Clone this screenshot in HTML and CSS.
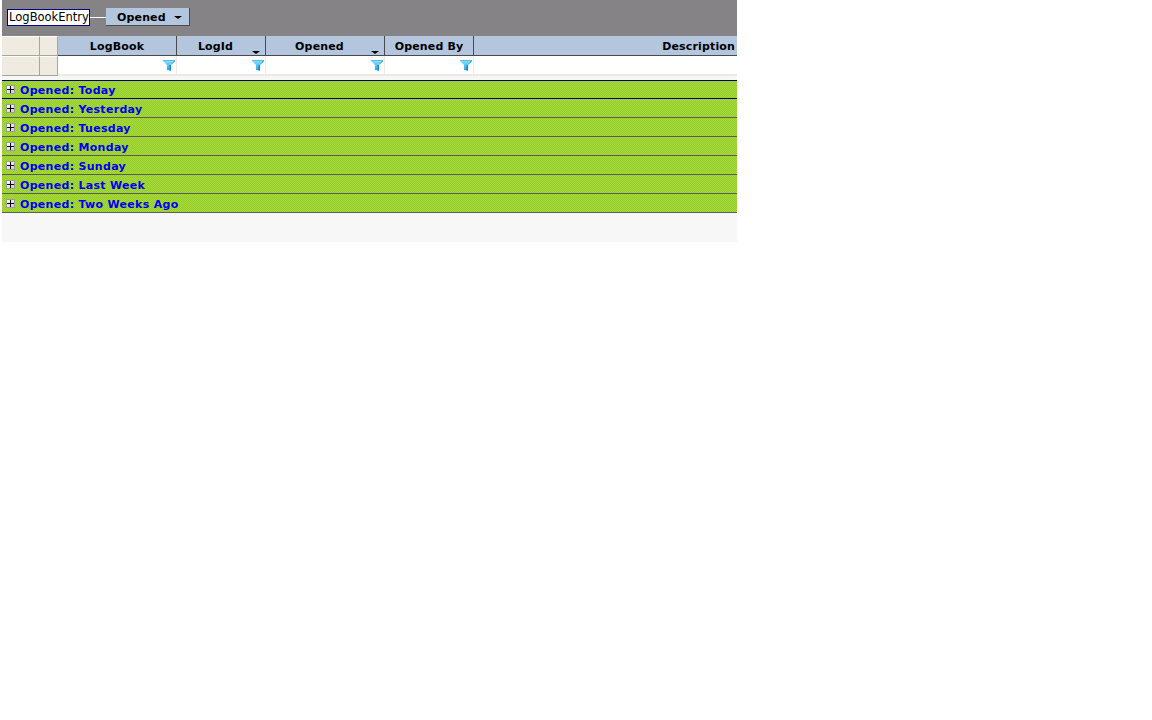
FILE: index.html
```html
<!DOCTYPE html>
<html lang="en">
<head>
<meta charset="utf-8">
<title>Log Book Entries</title>
<link rel="stylesheet" href="styles.css">
</head>
<body>
<svg class="defs" width="0" height="0" aria-hidden="true">
  <defs>
    <linearGradient id="plusfill" x1="0" y1="0" x2="1" y2="1">
      <stop offset="0" stop-color="#ffffff"/>
      <stop offset="1" stop-color="#c8c8c4"/>
    </linearGradient>
    <linearGradient id="funnelfill" x1="0" y1="0" x2="0" y2="1">
      <stop offset="0" stop-color="#8fe0fa"/>
      <stop offset="1" stop-color="#2aa8e6"/>
    </linearGradient>
    <symbol id="funnel" viewBox="0 0 12 12">
      <path d="M0 1h12v1L8 6v5.500L4 11V6L0 2z" fill="url(#funnelfill)"/>
      <path d="M0 1h12v1H0z" fill="#4fc3f0"/>
      <path d="M6.500 6H8v5.500H6.500zM8 6l3-4h1L8 6z" fill="#0f86c6"/>
    </symbol>
    <symbol id="plus" viewBox="0 0 9 9">
      <rect x=".5" y=".5" width="8" height="8" fill="url(#plusfill)" stroke="#9a9a9a"/>
      <path d="M1 4h7v1H1zM4 1h1v7H4z" fill="#000"/>
    </symbol>
  </defs>
</svg>
<main class="grid-wrap">
  <div class="group-bar">
    <span class="band-name">LogBookEntry</span>
    <span class="connector"></span>
    <span class="group-chip">Opened<i class="caret"></i></span>
  </div>
  <div class="cols head-row">
    <div class="cell stub"></div>
    <div class="cell stub"></div>
    <div class="cell hcell">LogBook</div>
    <div class="cell hcell sorted">LogId<i class="caret sort"></i></div>
    <div class="cell hcell sorted">Opened<i class="caret sort"></i></div>
    <div class="cell hcell">Opened By</div>
    <div class="cell hcell desc">Description</div>
  </div>
  <div class="cols filter-row">
    <div class="cell stub"></div>
    <div class="cell stub"></div>
    <div class="cell fcell"><svg class="funnel"><use href="#funnel"/></svg></div>
    <div class="cell fcell"><svg class="funnel"><use href="#funnel"/></svg></div>
    <div class="cell fcell"><svg class="funnel"><use href="#funnel"/></svg></div>
    <div class="cell fcell"><svg class="funnel"><use href="#funnel"/></svg></div>
    <div class="cell fcell last"></div>
  </div>
  <div class="groups">
    <div class="group active"><svg class="plus"><use href="#plus"/></svg><span class="group-label">Opened: Today</span></div>
    <div class="group"><svg class="plus"><use href="#plus"/></svg><span class="group-label">Opened: Yesterday</span></div>
    <div class="group"><svg class="plus"><use href="#plus"/></svg><span class="group-label">Opened: Tuesday</span></div>
    <div class="group"><svg class="plus"><use href="#plus"/></svg><span class="group-label">Opened: Monday</span></div>
    <div class="group"><svg class="plus"><use href="#plus"/></svg><span class="group-label">Opened: Sunday</span></div>
    <div class="group"><svg class="plus"><use href="#plus"/></svg><span class="group-label">Opened: Last Week</span></div>
    <div class="group"><svg class="plus"><use href="#plus"/></svg><span class="group-label">Opened: Two Weeks Ago</span></div>
  </div>
</main>
</body>
</html>
```
FILE: styles.css
```css
html, body { margin: 0; padding: 0; background: #fff; }
body { font-family: "DejaVu Sans", Verdana, sans-serif; padding-left: 2px; }
.defs { display: block; height: 0; }
.grid-wrap { width: 735px; background: #f7f7f7; height: 242px; }
.group-bar {
  height: 36px; background: #868386; display: flex; align-items: center;
  padding: 0 0 2px 5px; box-sizing: border-box;
}
.band-name {
  box-sizing: border-box; width: 83px; height: 17px; line-height: 15px;
  background: #fff; border: 1px solid #00007f; font-size: 11.5px; color: #000;
  text-align: center; white-space: nowrap; overflow: hidden; padding-left: 1px;
}
.connector { width: 16px; height: 1px; background: #fff; }
.group-chip {
  box-sizing: border-box; width: 84px; height: 18px; background: #b3c6de;
  border-right: 1px solid #4a4a4a; border-bottom: 1px solid #4a4a4a;
  font-size: 11px; font-weight: bold; color: #000; display: flex;
  align-items: center; padding: 2px 0 0 11px; gap: 8px; letter-spacing: .15px;
}
.caret {
  display: inline-block; width: 0; height: 0;
  border-left: 4px solid transparent; border-right: 4px solid transparent;
  border-top: 3px solid #000;
}
.cols { display: grid; grid-template-columns: 38px 18px 119px 89px 119px 89px 263px; grid-template-rows: 20px; }
.head-row { height: 20px; }
.filter-row { height: 20px; background: #fff; }
.cell { box-sizing: border-box; }
.stub { background: #efebe0; border-right: 1px solid #a8a69c; border-bottom: 1px solid #a8a69c; border-top: 1px solid #fff; }
.hcell {
  position: relative; background: #b3c6de; border-right: 1px solid #4a4a4a;
  border-bottom: 1px solid #4a4a4a; font-size: 11px; font-weight: bold; color: #000;
  text-align: center; line-height: 21px; white-space: nowrap; letter-spacing: .15px;
  overflow: hidden;
}
.sorted { padding-right: 11px; }
.desc { text-align: right; padding-right: 2px; border-right: 0; }
.sort { position: absolute; right: 5px; bottom: 1px; }
.fcell {
  background: #fff; border-right: 1px solid #eeeae2; border-bottom: 2px solid #eeeae2;
  display: flex; justify-content: flex-end; align-items: center; padding: 0 1px 1px 0;
}
.fcell.last { border-right: 0; }
.funnel { width: 12px; height: 12px; display: block; }
.groups { padding-top: 4px; }
.group {
  box-sizing: border-box; height: 19px; display: flex; align-items: center; gap: 5px;
  padding-left: 4px; border-bottom: 1px solid #5a5a5a;
  background-color: #9dd22f;
  background-image: conic-gradient(#a6da38 25%, #96cc2c 0 50%, #a6da38 0 75%, #96cc2c 0);
  background-size: 2px 2px;
  color: #0000ee; font-size: 11px; font-weight: bold; white-space: nowrap;
}
.group-label { padding-top: 2px; letter-spacing: .3px; }
.group.active { border-top: 1px solid #00007f; border-bottom: 1px solid #00007f; }
.plus { width: 9px; height: 9px; display: block; flex: none; }
```
